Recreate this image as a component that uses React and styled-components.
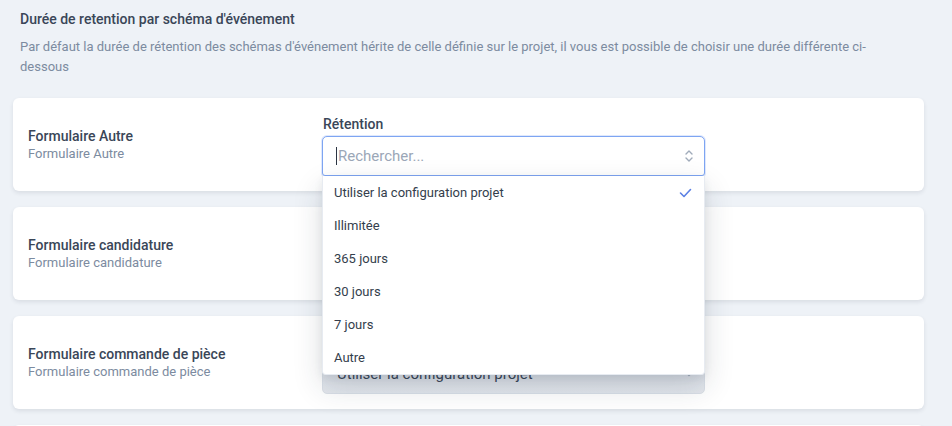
import React from 'react';
import styled, { createGlobalStyle } from 'styled-components';

const GlobalStyle = createGlobalStyle`
  html, body {
    margin: 0;
    padding: 0;
    background: #eef2f7;
    font-family: Roboto, "Liberation Sans", Arial, sans-serif;
    -webkit-font-smoothing: antialiased;
  }
`;

const Page = styled.div`
  padding: 9px 28px 0 13px;
  height: 426px;
  box-sizing: border-box;
  overflow: hidden;
`;

const Header = styled.div`
  padding-left: 7px;
  margin-bottom: 21px;
`;

const Title = styled.h2`
  margin: 0 0 8px;
  font-size: 14px;
  line-height: 20px;
  font-weight: 500;
  color: #3a4658;
`;

const Description = styled.p`
  margin: 0;
  font-size: 13px;
  line-height: 20px;
  color: #7c8ba0;
  max-width: 868px;
`;

const List = styled.div`
  display: flex;
  flex-direction: column;
  gap: 16px;
`;

const Card = styled.div`
  position: relative;
  z-index: ${p => (p.$raised ? 5 : 1)};
  display: flex;
  align-items: center;
  height: 93px;
  flex-shrink: 0;
  box-sizing: border-box;
  padding: 0 15px;
  background: #fff;
  border-radius: 6px;
  box-shadow: 0 2px 4px rgba(30, 41, 59, 0.1);
`;

const SchemaInfo = styled.div`
  width: 294px;
  flex-shrink: 0;
`;

const SchemaName = styled.div`
  font-size: 14px;
  line-height: 18px;
  font-weight: 500;
  color: #3a4658;
`;

const SchemaKey = styled.div`
  font-size: 13px;
  line-height: 18px;
  color: #7c8ba0;
`;

const Field = styled.div`
  position: relative;
  width: 383px;
  padding-top: 2px;
`;

const FieldLabel = styled.div`
  font-size: 14px;
  line-height: 18px;
  font-weight: 500;
  color: #3a4658;
  margin: 0 0 3px 1px;
`;

const SelectBox = styled.div`
  display: flex;
  align-items: center;
  height: 40px;
  box-sizing: border-box;
  padding: 0 10px 0 13px;
  border: 1px solid ${p => (p.$open ? '#7ea5f2' : '#d9dfe7')};
  border-radius: ${p => (p.$open ? '5px 5px 3px 3px' : '5px')};
  background: ${p => (p.$muted ? 'linear-gradient(180deg, #d9dee6, #e3e7ed)' : '#fff')};
  box-shadow: ${p => (p.$open ? '0 0 0 1px rgba(126, 165, 242, 0.25)' : 'none')};
`;

const Caret = styled.span`
  width: 1px;
  height: 18px;
  background: #2b3442;
  margin-right: 1px;
`;

const Placeholder = styled.span`
  flex: 1;
  font-size: 15px;
  color: #9ba7b7;
`;

const Value = styled.span`
  flex: 1;
  font-size: 15px;
  color: #3a4658;
  padding-left: 1px;
`;

const Menu = styled.ul`
  position: absolute;
  top: 100%;
  left: 0;
  right: 0;
  margin: 0;
  padding: 0;
  list-style: none;
  background: #fff;
  border: 1px solid #e7ebf1;
  border-top: none;
  border-radius: 0 0 4px 4px;
  box-shadow: 0 12px 30px rgba(30, 41, 59, 0.16), 0 3px 8px rgba(30, 41, 59, 0.08);
  z-index: 20;
`;

const Option = styled.li`
  display: flex;
  align-items: center;
  justify-content: space-between;
  height: 33px;
  padding: 0 12px 0 11px;
  font-size: 13px;
  color: #343e4c;
`;

const UpDownIcon = () => (
  <svg width="10" height="14" viewBox="0 0 10 14" fill="none" stroke="#a0abba" strokeWidth="1.4" strokeLinecap="round" strokeLinejoin="round">
    <path d="M2 5l3-3 3 3" />
    <path d="M2 9l3 3 3-3" />
  </svg>
);

const DownIcon = () => (
  <svg width="10" height="8" viewBox="0 0 10 8" fill="none" stroke="#a0abba" strokeWidth="1.4" strokeLinecap="round" strokeLinejoin="round">
    <path d="M2 2.5l3 3 3-3" />
  </svg>
);

const CheckIcon = () => (
  <svg width="13" height="10" viewBox="0 0 13 10" fill="none" stroke="#5b80e4" strokeWidth="1.6" strokeLinecap="round" strokeLinejoin="round">
    <path d="M1.5 5l3.5 3.5L11.5 1.5" />
  </svg>
);

const options = [
  'Utiliser la configuration projet',
  'Illimitée',
  '365 jours',
  '30 jours',
  '7 jours',
  'Autre',
];

const schemas = [
  { name: 'Formulaire Autre', open: true },
  { name: 'Formulaire candidature' },
  { name: 'Formulaire commande de pièce', muted: true },
];

export default function App() {
  return (
    <Page>
      <GlobalStyle />
      <Header>
        <Title>Durée de retention par schéma d'événement</Title>
        <Description>
          Par défaut la durée de rétention des schémas d'événement hérite de celle définie sur le projet, il vous est possible de choisir une durée différente ci-dessous
        </Description>
      </Header>
      <List>
        {schemas.map(schema => (
          <Card key={schema.name} $raised={schema.open}>
            <SchemaInfo>
              <SchemaName>{schema.name}</SchemaName>
              <SchemaKey>{schema.name}</SchemaKey>
            </SchemaInfo>
            <Field>
              <FieldLabel>Rétention</FieldLabel>
              {schema.open ? (
                <>
                  <SelectBox $open>
                    <Caret />
                    <Placeholder>Rechercher...</Placeholder>
                    <UpDownIcon />
                  </SelectBox>
                  <Menu>
                    {options.map((opt, i) => (
                      <Option key={opt}>
                        {opt}
                        {i === 0 && <CheckIcon />}
                      </Option>
                    ))}
                  </Menu>
                </>
              ) : (
                <SelectBox $muted={schema.muted}>
                  <Value>Utiliser la configuration projet</Value>
                  <DownIcon />
                </SelectBox>
              )}
            </Field>
          </Card>
        ))}
        {/* next card, cut off by the viewport */}
        <Card />
      </List>
    </Page>
  );
}
